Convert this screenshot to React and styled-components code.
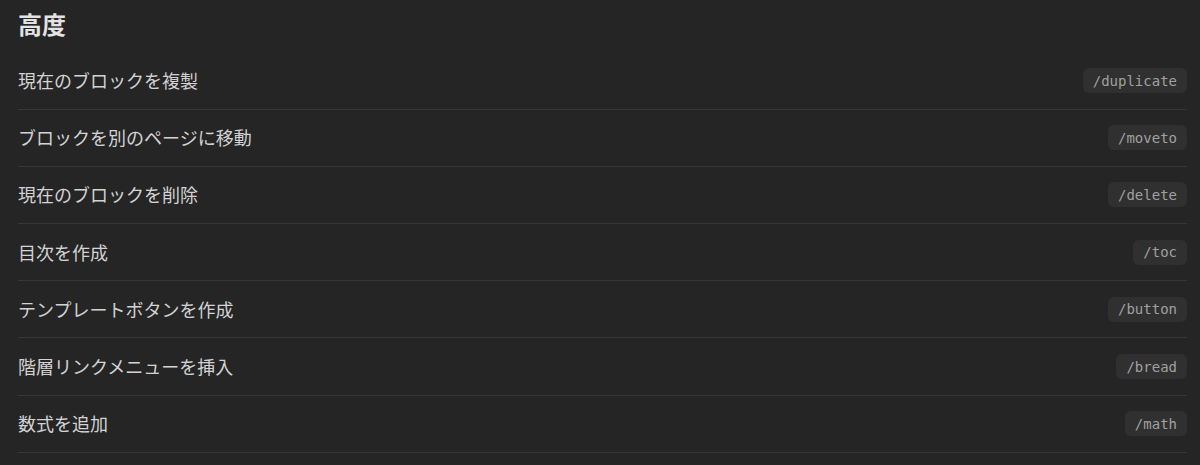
import React from 'react'
import styled, { createGlobalStyle } from 'styled-components'

const GlobalStyle = createGlobalStyle`
    html, body {
        margin: 0;
        padding: 0;
        background: #252525;
    }
    body {
        font-family: "Noto Sans CJK JP", "Noto Sans", sans-serif;
        -webkit-font-smoothing: antialiased;
    }
`

const commands = [
    { label: '現在のブロックを複製', slash: '/duplicate' },
    { label: 'ブロックを別のページに移動', slash: '/moveto' },
    { label: '現在のブロックを削除', slash: '/delete' },
    { label: '目次を作成', slash: '/toc' },
    { label: 'テンプレートボタンを作成', slash: '/button' },
    { label: '階層リンクメニューを挿入', slash: '/bread' },
    { label: '数式を追加', slash: '/math' },
]

const App = () => {
    return (
        <Page>
            <GlobalStyle />
            <Title>高度</Title>
            <List>
                {commands.map((cmd) => (
                    <Row key={cmd.slash}>
                        <Label>{cmd.label}</Label>
                        <Shortcut>{cmd.slash}</Shortcut>
                    </Row>
                ))}
            </List>
        </Page>
    )
}

const Page = styled.div`
    width: 1200px;
    height: 465px;
    box-sizing: border-box;
    padding: 7px 13px 0 18px;
    background: #252525;
    overflow: hidden;
`

const Title = styled.h2`
    margin: 0 0 11.5px;
    font-size: 24px;
    line-height: 34px;
    font-weight: 700;
    color: #e3e3e3;
`

const List = styled.div`
    display: flex;
    flex-direction: column;
`

const Row = styled.div`
    display: flex;
    align-items: center;
    justify-content: space-between;
    height: 56.2px;
    border-bottom: 1px solid #363636;
`

const Label = styled.span`
    font-size: 18px;
    color: #d3d3d3;
    line-height: 24px;
    margin-top: -1px;
`

const Shortcut = styled.code`
    display: inline-flex;
    align-items: center;
    height: 25px;
    padding: 0 10px;
    border-radius: 6px;
    background: #303030;
    color: #a0a0a0;
    font-family: "DejaVu Sans Mono", "Liberation Mono", monospace;
    font-size: 14px;
`

export default App
